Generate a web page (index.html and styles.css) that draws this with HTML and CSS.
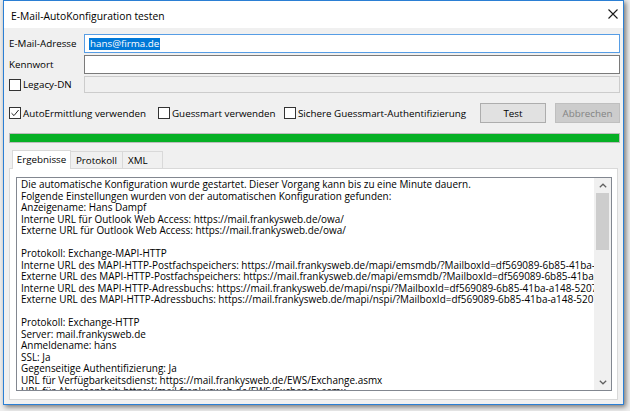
FILE: index.html
```html
<!DOCTYPE html>
<html lang="de">
<head>
<meta charset="utf-8">
<title>E-Mail-AutoKonfiguration testen</title>
<link rel="stylesheet" href="styles.css">
</head>
<body>
<div class="desktop">
  <div class="window">
    <div class="titlebar">
      <span class="title">E-Mail-AutoKonfiguration testen</span>
      <svg class="close" width="10" height="10" viewBox="0 0 10 10"><path d="M0.5 0.5L9.5 9.5M9.5 0.5L0.5 9.5" stroke="#1a1a1a" stroke-width="1.1" fill="none"/></svg>
    </div>
    <div class="content">
      <div class="form">
        <div class="label">E-Mail-Adresse</div>
        <div class="input focused"><span class="sel">hans@firma.de</span></div>
        <div class="label">Kennwort</div>
        <div class="input"></div>
        <div class="label check"><span class="box"></span><span>Legacy-DN</span></div>
        <div class="input disabled"></div>
      </div>
      <div class="options">
        <div class="check opt1"><span class="box"><svg width="10" height="10" viewBox="0 0 10 10"><path d="M1.5 5.2L4 7.6L8.6 2" stroke="#222" stroke-width="1" fill="none"/></svg></span><span>AutoErmittlung verwenden</span></div>
        <div class="check opt2"><span class="box"></span><span>Guessmart verwenden</span></div>
        <div class="check opt3"><span class="box"></span><span>Sichere Guessmart-Authentifizierung</span></div>
        <div class="buttons">
          <div class="btn">Test</div>
          <div class="btn disabled">Abbrechen</div>
        </div>
      </div>
      <div class="progress"><div class="fill" style="width:100%"></div></div>
      <div class="tabs">
        <div class="tab active t1">Ergebnisse</div>
        <div class="tab t2">Protokoll</div>
        <div class="tab t3">XML</div>
      </div>
      <div class="panel">
        <div class="textbox">
          <div class="text">Die automatische Konfiguration wurde gestartet. Dieser Vorgang kann bis zu eine Minute dauern.
Folgende Einstellungen wurden von der automatischen Konfiguration gefunden:
Anzeigename: Hans Dampf
Interne URL für Outlook Web Access: https://mail.frankysweb.de/owa/
Externe URL für Outlook Web Access: https://mail.frankysweb.de/owa/

Protokoll: Exchange-MAPI-HTTP
Interne URL des MAPI-HTTP-Postfachspeichers: https://mail.frankysweb.de/mapi/emsmdb/?MailboxId=df569089-6b85-41ba-a148-5207d5a0c8e2@firma.de
Externe URL des MAPI-HTTP-Postfachspeichers: https://mail.frankysweb.de/mapi/emsmdb/?MailboxId=df569089-6b85-41ba-a148-5207d5a0c8e2@firma.de
Interne URL des MAPI-HTTP-Adressbuchs: https://mail.frankysweb.de/mapi/nspi/?MailboxId=df569089-6b85-41ba-a148-5207d5a0c8e2@firma.de
Externe URL des MAPI-HTTP-Adressbuchs: https://mail.frankysweb.de/mapi/nspi/?MailboxId=df569089-6b85-41ba-a148-5207d5a0c8e2@firma.de

Protokoll: Exchange-HTTP
Server: mail.frankysweb.de
Anmeldename: hans
SSL: Ja
Gegenseitige Authentifizierung: Ja
URL für Verfügbarkeitsdienst: https://mail.frankysweb.de/EWS/Exchange.asmx
URL für Abwesenheit: https://mail.frankysweb.de/EWS/Exchange.asmx</div>
          <div class="scrollbar">
            <div class="arrow"><svg width="8" height="5" viewBox="0 0 8 5"><path d="M0.8 4.3L4 1.2L7.2 4.3" stroke="#606060" stroke-width="1.2" fill="none"/></svg></div>
            <div class="track"><div class="thumb"></div></div>
            <div class="arrow"><svg width="8" height="5" viewBox="0 0 8 5"><path d="M0.8 0.7L4 3.8L7.2 0.7" stroke="#606060" stroke-width="1.2" fill="none"/></svg></div>
          </div>
        </div>
      </div>
    </div>
  </div>
</div>
</body>
</html>
```

FILE: styles.css
```css
* { box-sizing: border-box; }
html, body { margin: 0; padding: 0; }
body {
  width: 630px;
  height: 411px;
  overflow: hidden;
  background: #eeeeee;
  font-family: "Open Sans", "Noto Sans", sans-serif;
  font-size: 9.8px;
  color: #000;
}
.desktop { padding-left: 3px; }
.window {
  width: 621px;
  height: 405px;
  border: 1px solid #2b7fd4;
  background: #f0f0f0;
  box-shadow: 2px 2px 5px rgba(0, 0, 0, 0.5);
  display: flex;
  flex-direction: column;
}
.titlebar {
  height: 27px;
  flex: none;
  background: #fff;
  display: flex;
  align-items: center;
  justify-content: space-between;
  padding: 2px 5px 0 7px;
}
.title { font-size: 10.3px; color: #000; }
.close { display: block; margin-top: -3px; }
.content {
  flex: 1;
  display: flex;
  flex-direction: column;
  padding: 6px 3px 4px 5px;
  min-height: 0;
}
.form {
  display: grid;
  grid-template-columns: 75px 1fr;
  grid-template-rows: 19px 19px 17px;
  row-gap: 2px;
}
.label { display: flex; align-items: center; }
.input {
  border: 1px solid #7a7a7a;
  background: #fff;
  display: flex;
  align-items: center;
  padding-left: 4px;
}
.input.focused { border-color: #569de5; }
.input.disabled { border-color: #cccccc; background: #f0f0f0; }
.sel {
  background: #0078d7;
  color: #fff;
  line-height: 12px;
  padding: 0 1px;
}
.check { display: flex; align-items: center; gap: 2px; }
.box {
  width: 12px;
  height: 12px;
  border: 1px solid #333;
  background: #fff;
  display: flex;
  align-items: center;
  justify-content: center;
  flex: none;
}
.box svg { display: block; }
.options {
  margin-top: 10px;
  height: 20px;
  display: flex;
  align-items: center;
}
.opt1 { width: 149px; }
.opt2 { width: 126px; }
.buttons { margin-left: auto; display: flex; gap: 9px; height: 20px; }
.btn {
  width: 66px;
  height: 20px;
  border: 1px solid #adadad;
  background: #e1e1e1;
  display: flex;
  align-items: center;
  justify-content: center;
}
.btn.disabled { width: 65px; background: #cccccc; border-color: #bfbfbf; color: #838383; }
.progress {
  margin-top: 10px;
  height: 10px;
  border: 1px solid #bcbcbc;
  background: #e6e6e6;
}
.fill { height: 100%; background: #06b025; }
.tabs {
  margin-top: 7px;
  height: 18px;
  display: flex;
  align-items: flex-end;
  padding-left: 3px;
  position: relative;
  z-index: 1;
}
.tab {
  height: 17px;
  border: 1px solid #d9d9d9;
  border-bottom: none;
  background: #f0f0f0;
  display: flex;
  align-items: center;
  justify-content: center;
  margin-left: -1px;
}
.tab.active {
  height: 19px;
  margin-bottom: -1px;
  background: #fff;
  padding-bottom: 2px;
  margin-left: 0;
}
.t1 { width: 59px; }
.t2 { width: 53px; }
.t3 { width: 41px; justify-content: flex-start; padding-left: 5px; }
.panel {
  flex: 1;
  min-height: 0;
  margin-right: 2px;
  border: 1px solid #d9d9d9;
  background: #fff;
  padding: 8px 5px 8px 6px;
  display: flex;
}
.textbox {
  flex: 1;
  border: 1px solid #828790;
  display: flex;
  overflow: hidden;
}
.text {
  flex: 1;
  min-width: 0;
  overflow: hidden;
  white-space: pre;
  font-size: 9.95px;
  line-height: 11.5px;
  padding: 1px 0 0 4px;
}
.scrollbar {
  width: 17px;
  flex: none;
  background: #f0f0f0;
  display: flex;
  flex-direction: column;
}
.arrow {
  height: 15px;
  display: flex;
  align-items: center;
  justify-content: center;
}
.track { flex: 1; padding: 0 2px; }
.thumb { height: 57px; background: #cdcdcd; }
```
